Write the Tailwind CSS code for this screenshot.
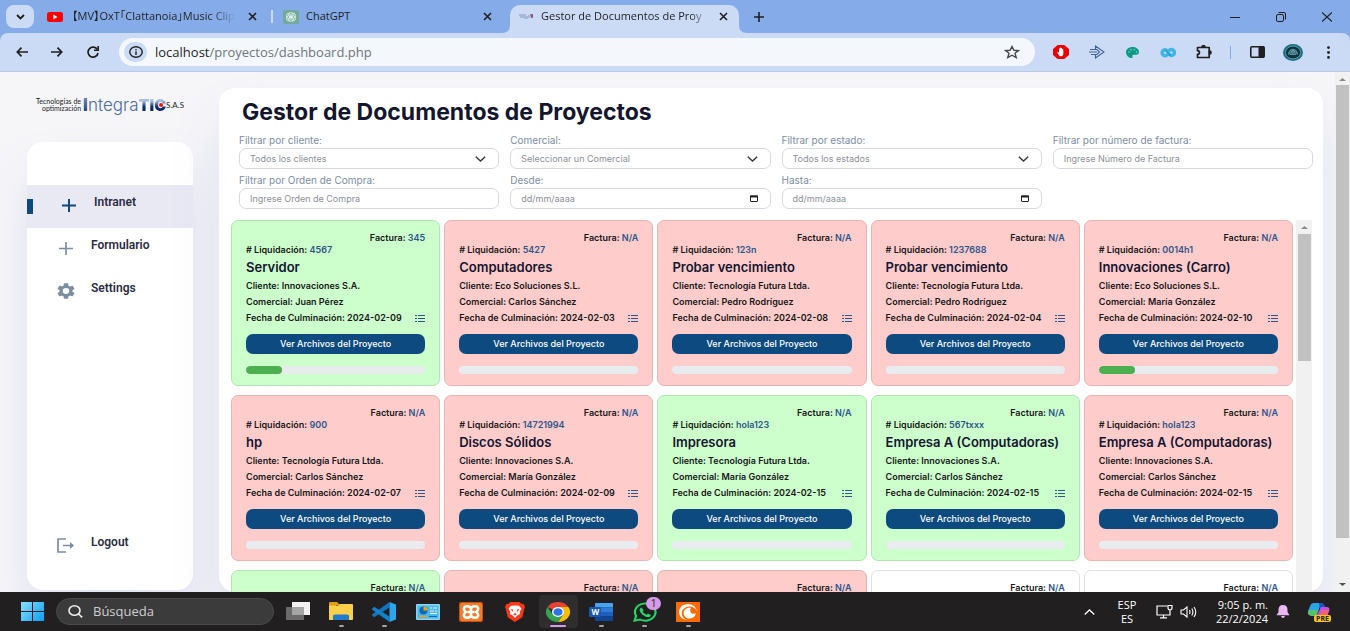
<!DOCTYPE html>
<html lang="es">
<head>
<meta charset="utf-8">
<title>Gestor de Documentos de Proyectos</title>
<script src="https://cdn.jsdelivr.net/npm/@tailwindcss/browser@4"></script>
</head>
<body class="flex h-screen flex-col overflow-hidden bg-[#85ace9] font-['Open_Sans',sans-serif] text-[#1f1f1f]">

<!-- Tab strip -->
<header class="flex h-[33px] shrink-0 items-center">
  <button aria-label="Buscar pestañas" class="ml-[6px] flex h-[23px] w-7 items-center justify-center rounded-lg bg-[#cbdbf5]">
    <svg class="h-[6px] w-[9px]" viewBox="0 0 9 6" fill="none" stroke="#1f1f1f" stroke-width="1.8"><path d="M1 1l3.500 3.500L8 1"/></svg>
  </button>
  <div class="ml-[13px] flex w-[214px] items-center">
    <svg class="h-[10px] w-4 shrink-0" viewBox="0 0 16 10"><rect width="16" height="10" rx="2.500" fill="#f00"/><path d="M6.300 2.600v4.800L10.500 5z" fill="#fff"/></svg>
    <a href="#" class="ml-[9px] w-[164px] overflow-hidden whitespace-nowrap mask-r-from-85% font-['Open_Sans','Noto_Sans_CJK_JP',sans-serif] text-[11px] [font-feature-settings:'palt']">【MV】OxT「Clattanoia」Music Clip</a>
    <button aria-label="Cerrar pestaña" class="ml-3"><svg class="size-[9px]" viewBox="0 0 9 9" stroke="#1f1f1f" stroke-width="1.600"><path d="M1 1l7 7M8 1L1 8"/></svg></button>
  </div>
  <div class="ml-[10px] h-[13px] w-[2px] bg-[#cbdbf5]"></div>
  <div class="ml-[10px] flex w-[219px] items-center">
    <svg class="h-[14px] w-4 shrink-0" viewBox="0 0 16 14"><rect width="16" height="14" rx="2" fill="#74aa9c"/><g fill="none" stroke="#e8f5f0" stroke-width=".8"><ellipse cx="8" cy="4.600" rx="2.600" ry="2"/><ellipse cx="8" cy="9.400" rx="2.600" ry="2"/><ellipse cx="5.500" cy="5.800" rx="2" ry="2.400"/><ellipse cx="10.500" cy="5.800" rx="2" ry="2.400"/><ellipse cx="5.500" cy="8.300" rx="2" ry="2.400"/><ellipse cx="10.500" cy="8.300" rx="2" ry="2.400"/></g></svg>
    <a href="#" class="ml-[7px] flex-1 text-[11px]">ChatGPT</a>
    <button aria-label="Cerrar pestaña" class="mr-[10px]"><svg class="size-[9px]" viewBox="0 0 9 9" stroke="#1f1f1f" stroke-width="1.600"><path d="M1 1l7 7M8 1L1 8"/></svg></button>
  </div>
  <div class="flex h-7 self-end">
    <svg class="h-2 w-2 self-end" viewBox="0 0 8 8"><path d="M8 0v8H0Q8 8 8 0z" fill="#cbdbf5"/></svg>
    <div class="flex w-[229px] items-center rounded-t-[10px] bg-[#cbdbf5] pr-[11px] pb-[5px] pl-[9px]">
      <svg class="h-[7px] w-[15px] shrink-0" viewBox="0 0 15 7"><path d="M0 2h5M1 4h4M6 1v5M8 3v3M10 2v3" stroke="#8096b8"/><path d="M11 1h3v4h-2z" fill="#5f7eb0"/><circle cx="13" cy="3" r="1" fill="#d33"/></svg>
      <a href="#" class="ml-[7px] w-[167px] overflow-hidden whitespace-nowrap mask-r-from-90% text-[11px]">Gestor de Documentos de Proy</a>
      <button aria-label="Cerrar pestaña" class="ml-auto"><svg class="size-[9px]" viewBox="0 0 9 9" stroke="#1f1f1f" stroke-width="1.600"><path d="M1 1l7 7M8 1L1 8"/></svg></button>
    </div>
    <svg class="h-2 w-2 self-end" viewBox="0 0 8 8"><path d="M0 0v8h8Q0 8 0 0z" fill="#cbdbf5"/></svg>
  </div>
  <button aria-label="Nueva pestaña" class="ml-[7px]"><svg class="size-[10px]" viewBox="0 0 10 10" stroke="#1f1f1f" stroke-width="1.600"><path d="M5 0v10M0 5h10"/></svg></button>
  <div class="mr-[18px] ml-auto flex items-center gap-9">
    <button aria-label="Minimizar"><svg class="h-[10px] w-[10px]" viewBox="0 0 10 10" stroke="#1f1f1f"><path d="M0 5.500h10"/></svg></button>
    <button aria-label="Restaurar"><svg class="h-[10px] w-[10px]" viewBox="0 0 10 10" fill="none" stroke="#1f1f1f"><rect x=".5" y="2.500" width="7" height="7" rx="1.500"/><path d="M2.500 .5H8a1.500 1.500 0 0 1 1.500 1.500v5.500"/></svg></button>
    <button aria-label="Cerrar"><svg class="h-[10px] w-[10px]" viewBox="0 0 10 10" stroke="#1f1f1f" stroke-width="1.200"><path d="M0 .5l10 9M10 .5l-10 9"/></svg></button>
  </div>
</header>

<!-- Toolbar -->
<nav aria-label="Navegador" class="flex h-[38px] shrink-0 items-center rounded-t-lg bg-[#cbdbf5]">
  <button aria-label="Atrás" class="ml-4"><svg class="h-[10px] w-3" viewBox="0 0 12 10" fill="none" stroke="#1f1f1f" stroke-width="1.700"><path d="M12 5H1.500M5.500 .7L1.300 5l4.200 4.300"/></svg></button>
  <button aria-label="Adelante" class="ml-[23px]"><svg class="h-[10px] w-3" viewBox="0 0 12 10" fill="none" stroke="#1f1f1f" stroke-width="1.700"><path d="M0 5h10.500M6.500 .7L10.700 5 6.500 9.300"/></svg></button>
  <button aria-label="Recargar" class="ml-6"><svg class="h-3 w-3" viewBox="0 0 12 12" fill="none" stroke="#1f1f1f" stroke-width="1.700"><path d="M10.300 3.500A5 5 0 1 0 11 7"/><path d="M11.200 0v4.300H7" stroke-width="1.600"/></svg></button>
  <div class="ml-5 flex h-7 flex-1 items-center rounded-full bg-[#f4f8fd] px-[5px]">
    <button aria-label="Información del sitio" class="flex h-5 w-[23px] items-center justify-center rounded-full bg-[#cbdbf5]"><svg class="h-3 w-[14px]" viewBox="0 0 14 12" fill="none" stroke="#1f1f1f" stroke-width="1.400"><ellipse cx="7" cy="6" rx="6.200" ry="5.300"/><path d="M7 5.300V9M7 3v1.300"/></svg></button>
    <div class="relative ml-2 h-5 flex-1">
      <input aria-label="Dirección" value="localhost/proyectos/dashboard.php" class="block h-5 w-full bg-transparent text-[13px] leading-5 text-[#70757a] outline-none">
      <span aria-hidden="true" class="pointer-events-none absolute top-0 left-0 bg-[#f4f8fd] text-[13px] leading-5 text-[#1f1f1f]">localhost</span>
    </div>
    <button aria-label="Marcador" class="mr-[10px]"><svg class="h-[14px] w-4" viewBox="0 0 16 14" fill="none" stroke="#474747" stroke-width="1.400"><path d="M8 1.500l1.900 3.800 4.600.3-3.500 2.700 1.200 4.200L8 10.200l-4.200 2.300L5 8.300 1.500 5.600l4.600-.3z"/></svg></button>
  </div>
  <div class="ml-[18px] flex shrink-0 items-center">
    <button aria-label="AdBlock" class="w-4"><svg class="h-[14px] w-4" viewBox="0 0 16 14"><path d="M4.700 0h6.600L16 4.100v5.800L11.300 14H4.700L0 9.900V4.100z" fill="#e60505"/><path d="M5 7l1 .6V3.800c0-.8 1-.8 1 0V3c0-.8 1.100-.8 1.100 0v.6c0-.8 1.100-.8 1.100 0v1c0-.7 1.100-.7 1.100 0V9c0 1.600-1.300 2.300-2.600 2.300C6.300 11.300 5.300 9.500 4.300 7.700z" fill="#fff"/></svg></button>
    <button aria-label="Extensión" class="ml-5 w-4"><svg class="h-[14px] w-4" viewBox="0 0 16 14" fill="none" stroke="#43648f" stroke-width="1.100"><path d="M6.500 4.500V1L15 7l-8.500 6V9.500M1 4.500h7L10.500 7 8 9.500H2M0 7h8"/></svg></button>
    <button aria-label="Paleta" class="ml-[21px] w-3"><svg class="h-[11px] w-[13px]" viewBox="0 0 13 11"><path d="M6.500 0C2.900 0 0 2.200 0 5.200 0 8 2.500 11 5.500 11c1 0 1.300-.6 1-1.300-.5-1 .2-1.900 1.300-1.900h2.400C12 7.800 13 6.700 13 5 13 2 10 0 6.500 0z" fill="#0c9a84"/><g fill="#8fd0c8"><circle cx="3" cy="5" r=".8"/><circle cx="5" cy="2.700" r=".8"/><circle cx="8.300" cy="2.700" r=".8"/><circle cx="10.600" cy="5" r=".8"/></g></svg></button>
    <button aria-label="Infinito" class="ml-[22px] w-4"><svg class="h-[11px] w-4" viewBox="0 0 16 11" fill="none" stroke-linecap="round"><path d="M7.500 7.500L6 8.600a3 3 0 1 1 0-5.700c2 .6 2.500 4.800 4.500 5.400a3 3 0 1 0 0-5.700L9 3.600" stroke="#3fb6ea" stroke-width="3.400"/><path d="M5.500 3.500c2.500.5 2.500 4.500 5 5" stroke="#1b8cc4" stroke-width="1"/></svg></button>
    <button aria-label="Extensiones" class="ml-5 w-[17px]"><svg class="h-[14px] w-[17px]" viewBox="0 0 17 14" fill="none" stroke="#1f1f1f" stroke-width="1.700"><path d="M1.500 2.500h11.700v10H1.500V9.300c2.600-.2 2.600-3.400 0-3.600z" stroke-linejoin="round"/><path d="M6 2.200a1.500 1.500 0 0 1 3 0zM13.500 6a1.500 1.500 0 0 1 0 3z" fill="#1f1f1f"/></svg></button>
    <div class="ml-[17px] h-[13px] w-px bg-[#7cacf8]"></div>
    <button aria-label="Panel lateral" class="ml-[19px] w-[15px]"><svg class="h-3 w-[15px]" viewBox="0 0 15 12"><rect x=".8" y=".8" width="13.400" height="10.400" rx="1" fill="none" stroke="#1f1f1f" stroke-width="1.600"/><path d="M8.500 0H14v12H8.500z" fill="#1f1f1f"/></svg></button>
    <button aria-label="Perfil" class="ml-[18px] w-5"><svg class="h-[17px] w-5" viewBox="0 0 20 17"><ellipse cx="10" cy="8.500" rx="10" ry="8.500" fill="#1d6f80"/><ellipse cx="10" cy="8.500" rx="7.600" ry="6.400" fill="#13303c" stroke="#4fb5c0" stroke-width=".8"/><path d="M5.500 10.500c0-7 9-7 9 0M7 10.500h6M8 8l2-2 2 2z" fill="#397482" stroke="#6fa4ac" stroke-width=".8"/></svg></button>
    <button aria-label="Menú" class="mr-[20px] ml-[24px]"><svg class="h-[13px] w-[3px]" viewBox="0 0 3 13" fill="#1f1f1f"><circle cx="1.500" cy="1.600" r="1.400"/><circle cx="1.500" cy="6.500" r="1.400"/><circle cx="1.500" cy="11.400" r="1.400"/></svg></button>
  </div>
</nav>

<!-- Web page -->
<div class="flex min-h-0 flex-1 border-t border-[#b9c9e6] bg-[#f6f6f9] font-[Inter,sans-serif]">
  <aside class="ml-[27px] flex w-[166px] shrink-0 flex-col pb-[2px]">
    <div class="flex h-[70px] items-center justify-center pb-1 whitespace-nowrap">
      <div class="mr-[2px] text-right font-[Lato,sans-serif] text-[7px] leading-[7px] text-[#222]">Tecnologías de<br>optimización</div>
      <div class="flex items-center text-[17px] leading-5">
        <span class="bg-linear-to-b from-[#7f9ccc] to-[#10346e] bg-clip-text font-black text-transparent">I</span><span class="font-light text-[#4a6ba3]">ntegra</span>
        <span class="relative bg-linear-to-b from-[#a9bfe2] from-30% to-[#062b66] to-60% bg-clip-text text-base leading-5 font-black text-transparent">TIC<i class="absolute top-[8px] right-[3px] size-1 rounded-full bg-[#f01414]"></i></span>
      </div>
      <span class="font-[Lato,sans-serif] text-[8px] text-[#222]">S.A.S</span>
    </div>
    <div class="flex flex-1 flex-col overflow-hidden rounded-2xl bg-white pt-[43px] shadow-[0_32px_48px_rgba(132,139,200,0.18)]">
      <a href="#" class="flex h-[43px] items-start bg-[#e9e9f4] font-[Roboto,sans-serif] text-xs font-semibold text-[#2b2d44]">
        <span class="mt-[14px] h-[15px] w-[6px] bg-[#0d4a80]"></span>
        <svg class="mt-[14px] ml-[29px] h-[13px] w-[14px]" viewBox="0 0 14 13" stroke="#0d4a80" stroke-width="2"><path d="M7 0v13M0 6.500h14"/></svg>
        <span class="mt-[9px] ml-[18px]">Intranet</span>
      </a>
      <a href="#" class="flex h-[43px] items-start font-[Roboto,sans-serif] text-xs font-semibold text-[#2b2d44]">
        <svg class="mt-[14px] ml-8 h-[13px] w-[14px]" viewBox="0 0 14 13" stroke="#7d8da1" stroke-width="1.700"><path d="M7 0v13M0 6.500h14"/></svg>
        <span class="mt-[9px] ml-[18px]">Formulario</span>
      </a>
      <a href="#" class="flex h-[43px] items-start font-[Roboto,sans-serif] text-xs font-semibold text-[#2b2d44]">
        <svg class="mt-3 ml-[30px] h-4 w-[18px]" viewBox="2 2 20 20" preserveAspectRatio="none" fill="#7d8da1"><path d="M19.140 12.940c.04-.3.060-.61.060-.94s-.02-.64-.07-.94l2.030-1.580a.49.490 0 0 0 .12-.61l-1.920-3.320a.49.490 0 0 0-.59-.22l-2.390.960c-.5-.38-1.030-.7-1.620-.94l-.36-2.540a.48.480 0 0 0-.48-.41h-3.840c-.24 0-.43.170-.47.410l-.36 2.540c-.59.240-1.130.570-1.620.940l-2.390-.96a.48.480 0 0 0-.59.220L2.740 8.870a.48.480 0 0 0 .12.610l2.030 1.580c-.05.3-.09.630-.09.940s.02.640.070.940l-2.030 1.580a.49.490 0 0 0-.12.610l1.920 3.320c.12.220.37.290.59.220l2.390-.96c.5.380 1.030.7 1.620.940l.36 2.540c.05.240.24.410.48.410h3.840c.24 0 .44-.17.470-.41l.36-2.540c.59-.24 1.130-.56 1.620-.94l2.390.960c.22.080.47 0 .59-.22l1.920-3.320a.48.480 0 0 0-.12-.61zM12 15.600A3.600 3.600 0 1 1 12 8.400a3.600 3.600 0 0 1 0 7.200z"/></svg>
        <span class="mt-[9px] ml-4">Settings</span>
      </a>
      <a href="#" class="mt-auto flex h-[65px] items-start font-[Roboto,sans-serif] text-xs font-semibold text-[#2b2d44]">
        <svg class="mt-[13px] ml-[30px] h-[15px] w-[18px]" viewBox="0 0 18 15" fill="none" stroke="#7d8da1" stroke-width="1.700"><path d="M9 1H1v13h8M6 7.500h10"/><path d="M13 4l4 3.500-4 3.500z" fill="#7d8da1" stroke="none"/></svg>
        <span class="mt-[9px] ml-4">Logout</span>
      </a>
    </div>
  </aside>

  <main class="mt-4 mr-3 ml-[26px] flex min-w-0 flex-1 flex-col rounded-2xl bg-white shadow-[0_32px_48px_rgba(132,139,200,0.18)]">
    <h1 class="mt-2 ml-[23px] text-[23px] leading-8 font-bold text-[#14152f]">Gestor de Documentos de Proyectos</h1>
    <form class="mr-[10px] ml-5 grid grid-cols-4 gap-x-[11px] text-[10px] text-[#7d8da1]">
      <div class="h-10 pt-[6px]">
        <label for="cliente" class="block h-[13px] leading-[13px]">Filtrar por cliente:</label>
        <div class="relative mt-px">
          <select id="cliente" class="h-[21px] w-full appearance-none rounded-[7px] border border-[#d6dae0] bg-white px-[10px] text-[9px] text-[#8b8f96]"><option>Todos los clientes</option></select>
          <svg class="pointer-events-none absolute top-[8px] right-[13px] h-[6px] w-[11px]" viewBox="0 0 11 6" fill="none" stroke="#343a40" stroke-width="1.500"><path d="M.8.700l4.700 4.300L10.200.7"/></svg>
        </div>
      </div>
      <div class="h-10 pt-[6px]">
        <label for="comercial" class="block h-[13px] leading-[13px]">Comercial:</label>
        <div class="relative mt-px">
          <select id="comercial" class="h-[21px] w-full appearance-none rounded-[7px] border border-[#d6dae0] bg-white px-[10px] text-[9px] text-[#8b8f96]"><option>Seleccionar un Comercial</option></select>
          <svg class="pointer-events-none absolute top-[8px] right-[13px] h-[6px] w-[11px]" viewBox="0 0 11 6" fill="none" stroke="#343a40" stroke-width="1.500"><path d="M.8.700l4.700 4.300L10.200.7"/></svg>
        </div>
      </div>
      <div class="h-10 pt-[6px]">
        <label for="estado" class="block h-[13px] leading-[13px]">Filtrar por estado:</label>
        <div class="relative mt-px">
          <select id="estado" class="h-[21px] w-full appearance-none rounded-[7px] border border-[#d6dae0] bg-white px-[10px] text-[9px] text-[#8b8f96]"><option>Todos los estados</option></select>
          <svg class="pointer-events-none absolute top-[8px] right-[13px] h-[6px] w-[11px]" viewBox="0 0 11 6" fill="none" stroke="#343a40" stroke-width="1.500"><path d="M.8.700l4.700 4.300L10.200.7"/></svg>
        </div>
      </div>
      <div class="h-10 pt-[6px]">
        <label for="factura" class="block h-[13px] leading-[13px]">Filtrar por número de factura:</label>
        <input id="factura" placeholder="Ingrese Número de Factura" class="mt-px block h-[21px] w-full rounded-[7px] border border-[#d6dae0] px-[10px] text-[9px] placeholder:text-[#8b8f96]">
      </div>
      <div class="h-10 pt-[6px]">
        <label for="orden" class="block h-[13px] leading-[13px]">Filtrar por Orden de Compra:</label>
        <input id="orden" placeholder="Ingrese Orden de Compra" class="mt-px block h-[21px] w-full rounded-[7px] border border-[#d6dae0] px-[10px] text-[9px] placeholder:text-[#8b8f96]">
      </div>
      <div class="h-10 pt-[6px]">
        <label for="desde" class="block h-[13px] leading-[13px]">Desde:</label>
        <div class="relative mt-px">
          <input id="desde" placeholder="dd/mm/aaaa" class="block h-[21px] w-full rounded-[7px] border border-[#d6dae0] px-[10px] text-[9px] placeholder:text-[#8b8f96]">
          <svg class="absolute top-[7px] right-[13px] h-[7px] w-2" viewBox="0 0 8 7" fill="none" stroke="#222"><rect x=".5" y="1" width="7" height="5.500" rx=".5"/><path d="M0 1.500h8" stroke-width="2"/></svg>
        </div>
      </div>
      <div class="h-10 pt-[6px]">
        <label for="hasta" class="block h-[13px] leading-[13px]">Hasta:</label>
        <div class="relative mt-px">
          <input id="hasta" placeholder="dd/mm/aaaa" class="block h-[21px] w-full rounded-[7px] border border-[#d6dae0] px-[10px] text-[9px] placeholder:text-[#8b8f96]">
          <svg class="absolute top-[7px] right-[13px] h-[7px] w-2" viewBox="0 0 8 7" fill="none" stroke="#222"><rect x=".5" y="1" width="7" height="5.500" rx=".5"/><path d="M0 1.500h8" stroke-width="2"/></svg>
        </div>
      </div>
    </form>
    <div class="mt-3 mr-[11px] ml-3 flex min-h-0 flex-1">
      <section id="cards" aria-label="Proyectos" class="grid flex-1 auto-rows-max grid-cols-5 gap-x-1 gap-y-[9px] overflow-hidden"></section>
      <div class="ml-[3px] flex w-4 flex-col items-center bg-[#f1f1f1]">
        <svg class="mt-[6px] mb-[5px] h-[3px] w-[7px] shrink-0" viewBox="0 0 6 3" preserveAspectRatio="none"><path d="M3 0l3 3H0z" fill="#8a8a8a"/></svg>
        <div class="h-[127px] w-[13px] bg-[#c1c1c1]"></div>
      </div>
    </div>
  </main>

  <div class="flex w-[15px] shrink-0 flex-col items-center bg-[#f1f1f1]">
    <svg class="mt-[6px] mb-[4px] h-[3px] w-[7px] shrink-0" viewBox="0 0 6 3" preserveAspectRatio="none"><path d="M3 0l3 3H0z" fill="#8a8a8a"/></svg>
    <div class="mb-[45px] w-[13px] flex-1 bg-[#c1c1c1]"></div>
    <svg class="mb-[6px] h-[3px] w-[7px] shrink-0" viewBox="0 0 6 3" preserveAspectRatio="none"><path d="M0 0h6L3 3z" fill="#505050"/></svg>
  </div>
</div>

<!-- Taskbar -->
<footer class="flex h-[39px] shrink-0 items-center bg-[#211f20] text-white">
  <button aria-label="Inicio" class="ml-[21px]"><svg class="h-[19px] w-[23px]" viewBox="0 0 23 19"><defs><linearGradient id="win" gradientUnits="userSpaceOnUse" x1="0" y1="0" x2="23" y2="19"><stop stop-color="#8be0ff"/><stop offset="1" stop-color="#0a9cf5"/></linearGradient></defs><path d="M0 0h11v9H0zM12 0h11v9H12zM0 10h11v9H0zM12 10h11v9H12z" fill="url(#win)"/></svg></button>
  <label class="ml-3 flex h-[27px] w-[218px] items-center rounded-full border border-[#4b4a4b] bg-[#3c3b3c] px-[11px]">
    <svg class="h-[13px] w-[15px] shrink-0" viewBox="0 0 15 13" fill="none" stroke="#eee" stroke-width="1.600"><ellipse cx="6.500" cy="5.500" rx="5.500" ry="4.700"/><path d="M10.500 9l3.700 3.400"/></svg>
    <input aria-label="Búsqueda" placeholder="Búsqueda" class="ml-[10px] w-full bg-transparent text-[13px] outline-none placeholder:text-[#cfcfcf]">
  </label>
  <div class="ml-[2px] grid w-[434px] grid-cols-10">
    <button aria-label="Vista de tareas" class="flex h-[33px] items-center justify-center"><svg class="h-[19px] w-6" viewBox="0 0 24 19"><path d="M0 5h18v13H0z" fill="#6a6a6a"/><path d="M6 0h18v13H6z" fill="#f1f1f1"/><path d="M6 5h12v8H6z" fill="#a5a5a5"/></svg></button>
    <button aria-label="Explorador" class="relative flex h-[33px] items-center justify-center"><svg class="h-[19px] w-6" viewBox="0 0 24 19"><path d="M0 1q0-1 1-1h7l3 3h-4v15H1q-1 0-1-1z" fill="#e3a008"/><path d="M0 3.500h9L11 2h12q1 0 1 1v14q0 1-1 1H1q-1 0-1-1z" fill="#fcd04b"/><path d="M4 18v-4q0-1.500 2-1.500h12q2 0 2 1.500v4z" fill="#1f7dcb"/></svg><i class="absolute bottom-[1px] h-[2px] w-[5px] rounded bg-[#a3a3a3]"></i></button>
    <button aria-label="Visual Studio Code" class="relative flex h-[33px] items-center justify-center"><svg class="h-5 w-6" viewBox="0 0 24 20"><path d="M17.500 5.400L2.200 15.200 0 13.200v-.8L17.500 0z" fill="#0f76bd"/><path d="M17.500 20L0 7.600v-.8l2.200-2L17.500 14.600z" fill="#1282cc"/><path d="M17.500 0L24 2.600v14.800L17.500 20z" fill="#2aa5ee"/></svg><i class="absolute bottom-[1px] h-[2px] w-[5px] rounded bg-[#a3a3a3]"></i></button>
    <button aria-label="Panel de control" class="flex h-[33px] items-center justify-center"><svg class="h-4 w-6" viewBox="0 0 24 16"><rect width="24" height="16" rx="1" fill="#8bd6f5"/><rect x="1.500" y="1.500" width="21" height="13" fill="#4db6ea"/><circle cx="7.500" cy="6.500" r="4" fill="#0b6cb5"/><path d="M7.500 6.500v-4a4 4 0 0 1 4 4z" fill="#f59f1b"/><path d="M14 4h2m1 0h4M14 7h4m1 0h2M14 9.500h7" stroke="#e8f8ff" stroke-width="1.200"/><path d="M3 12.500h8" stroke="#f59f1b" stroke-width="1.500"/><path d="M13 12.500h8" stroke="#0b6cb5"/></svg></button>
    <button aria-label="XAMPP" class="flex h-[33px] items-center justify-center"><svg class="h-5 w-6" viewBox="0 0 24 20"><rect width="24" height="20" rx="2" fill="#c9500f"/><rect x="1" y="1" width="22" height="18" rx="2" fill="#f07c2c"/><path d="M12 6.500C11 3.500 5 3.500 4.800 6.800c0 1.700 1 2.500 2 3.200-1 .7-2 1.500-2 3.200.2 3.300 6.200 3.300 7.200.3 1 3 7 3 7.200-.3 0-1.700-1-2.500-2-3.200 1-.7 2-1.500 2-3.200C19 3.500 13 3.500 12 6.500zM8.500 10h7M12 7v6" fill="none" stroke="#fff" stroke-width="2.500"/></svg></button>
    <button aria-label="Brave" class="flex h-[33px] items-center justify-center"><svg class="h-5 w-5" viewBox="0 0 20 20"><path d="M5.500 0h9l2 2 2-.2 1.500 3-.7 2-2 8.500L10 20l-7.300-4.700-2-8.500L0 4.800l1.500-3 2 .2z" fill="#f6391b"/><path d="M10 3.500l4 .3 2.500 3-1.800 3 .3 2.200-3 1.700L10 16l-2-2.300L5 12l.3-2.200-1.800-3 2.500-3z" fill="#fff"/><path d="M5.500 7l3 .8-1 2zM14.500 7l-3 .8 1 2zM8.200 12.200L10 11l1.800 1.200L10 13.500z" fill="#f6391b"/></svg></button>
    <button aria-label="Chrome" class="relative flex h-[33px] items-center justify-center"><span class="flex h-[33px] w-[39px] items-center justify-center rounded bg-[#2f2d2e]"><svg class="h-5 w-6" viewBox="0 0 24 24" preserveAspectRatio="none"><path d="M12 12L1.600 6a12 12 0 0 1 20.800 0z" fill="#e94235"/><path d="M12 6h10.400A12 12 0 0 1 12 24l5.200-9z" fill="#fbbc04"/><path d="M1.600 6A12 12 0 0 0 12 24l5.200-9H6.800z" fill="#34a353"/><circle cx="12" cy="12" r="6" fill="#fff"/><circle cx="12" cy="12" r="4.600" fill="#2d73e8"/></svg></span><i class="absolute bottom-[1px] h-[2px] w-4 rounded bg-[#d49be8]"></i></button>
    <button aria-label="Word" class="relative flex h-[33px] items-center justify-center"><span class="relative"><svg class="h-[18px] w-6" viewBox="0 0 24 18"><path d="M6 1q0-1 1-1h16q1 0 1 1v3.500H6z" fill="#45a3ef"/><path d="M6 4.500h18V9H6z" fill="#2f7cd8"/><path d="M6 9h18v4.500H6z" fill="#1c5fbc"/><path d="M6 13.500h18V17q0 1-1 1H7q-1 0-1-1z" fill="#134494"/><rect y="4" width="12" height="10" rx="1" fill="#1a55b0"/></svg><span class="absolute top-1 left-[2px] text-[8px] leading-[10px] font-bold">W</span></span><i class="absolute bottom-[1px] h-[2px] w-[5px] rounded bg-[#a3a3a3]"></i></button>
    <button aria-label="WhatsApp" class="relative flex h-[33px] items-center justify-center"><svg class="h-5 w-6" viewBox="0 0 24 24" preserveAspectRatio="none"><path d="M1.500 22.500l1.600-5.700A10.300 10.300 0 1 1 7.100 21z" fill="none" stroke="#25d366" stroke-width="2.200"/><path d="M8.600 6.500c-.6 0-2 1-2 3 0 3.500 5 8.500 8.300 8.500 1.900 0 3-1.200 3-2.500l-3-1.800-1.500 1.500c-1.500-.6-3.200-2.200-3.800-3.700l1.100-1.400z" fill="#25d366"/></svg><span class="absolute top-[2px] left-[23px] flex h-[13px] w-[15px] items-center justify-center rounded-full bg-[#d49be8] text-[10px] text-[#222]">1</span><i class="absolute bottom-[1px] h-[2px] w-[5px] rounded bg-[#a3a3a3]"></i></button>
    <button aria-label="Crunchyroll" class="relative flex h-[33px] items-center justify-center"><svg class="h-5 w-6" viewBox="0 0 24 20"><path d="M0 0h24v20H0z" fill="#ff6a00"/><path d="M21 9.500C20.500 5 16.500 2 12 2 7 2 3 5.600 3 10s3.500 7.700 8 8C8 17 5.800 14.500 5.800 11.500 5.800 7.500 9.300 4.500 13.500 4.500c3.500 0 6.500 2 7.500 5z" fill="#fff"/><path d="M15 6c-4-.8-7.300 1.700-7.300 5.200 0 3 2.700 5.300 6 5.300 3.500 0 6.200-2.400 6-5.400-1.200 1-3.200 1-4.400-.2-1.400-1.500-1.500-3.500-.3-4.900z" fill="#fff"/></svg><i class="absolute bottom-[1px] h-[2px] w-[5px] rounded bg-[#a3a3a3]"></i></button>
  </div>
  <div class="mr-[19px] ml-auto flex items-center text-[11px] leading-[14px]">
    <button aria-label="Iconos ocultos"><svg class="h-[6px] w-[11px]" viewBox="0 0 11 6" fill="none" stroke="#fff" stroke-width="1.300"><path d="M.7 5.500L5.500 1l4.800 4.500"/></svg></button>
    <span class="ml-[20px] w-6 text-center">ESP<br>ES</span>
    <svg class="ml-[17px] h-[15px] w-[17px]" viewBox="0 0 17 15" fill="none" stroke="#fff" stroke-width="1.200"><path d="M11 2H1v9h13V8M4 13.800h7M7.500 11v3M12 1.500h4V4q0 1.800-2 1.800T12 4zM14 6v3"/></svg>
    <svg class="ml-[7px] h-3 w-[17px]" viewBox="0 0 17 12" fill="none" stroke="#fff" stroke-width="1.100"><path d="M1 4h2.500L7 1v10L3.500 8H1zM9.500 4q1 2 0 4M11.800 2.500q2.200 3.500 0 7M14 1q3.500 5 0 10"/></svg>
    <time class="ml-[15px] w-[56px] text-right whitespace-nowrap">9:05 p. m.<br>22/2/2024</time>
    <svg class="ml-2 h-[13px] w-[14px]" viewBox="0 0 14 13" fill="#e9b8f0"><path d="M7 0C4 0 2.500 2 2.500 4.500V7L.500 10.300h13L11.500 7V4.500C11.500 2 10 0 7 0zM5 11h4q-.5 2-2 2t-2-2z"/></svg>
    <span class="relative ml-[17px]"><svg class="h-5 w-[24px]" viewBox="0 0 24 20"><path d="M7 1h7l-4 12H4Q0 13 1 9L3.500 3Q4.500 1 7 1z" fill="#27a6e5"/><path d="M3 8h8l-2 6H4Q0 13 1.500 9.500z" fill="#57c26a"/><path d="M12 1h3q2 0 2.700 2.500L19 7h-6z" fill="#1656c4"/><path d="M14 5h6q3 0 2.300 3.500L20 15H9z" fill="#c052e0"/><path d="M15 8h7l-2 6h-8z" fill="#f1607f"/></svg><span class="absolute right-0 bottom-0 rounded-[2px] bg-[#fdc613] px-[2px] text-[7px] leading-[7px] font-bold text-[#222]">PRE</span></span>
  </div>
</footer>

<script>
const tones = {
  green: "border-[#b4e3b4] bg-[#ccffcc]",
  red: "border-[#e8b4b4] bg-[#ffcccc]",
  white: "border-[#e0e0e0] bg-white"
};
const projects = [
  ["green","345","4567","Servidor","Innovaciones S.A.","Juan Pérez","2024-02-09",20],
  ["red","N/A","5427","Computadores","Eco Soluciones S.L.","Carlos Sánchez","2024-02-03",0],
  ["red","N/A","123n","Probar vencimiento","Tecnología Futura Ltda.","Pedro Rodríguez","2024-02-08",0],
  ["red","N/A","1237688","Probar vencimiento","Tecnología Futura Ltda.","Pedro Rodríguez","2024-02-04",0],
  ["red","N/A","0014h1","Innovaciones (Carro)","Eco Soluciones S.L.","María González","2024-02-10",20],
  ["red","N/A","900","hp","Tecnología Futura Ltda.","Carlos Sánchez","2024-02-07",0],
  ["red","N/A","14721994","Discos Sólidos","Innovaciones S.A.","María González","2024-02-09",0],
  ["green","N/A","hola123","Impresora","Tecnología Futura Ltda.","María González","2024-02-15",0],
  ["green","N/A","567txxx","Empresa A (Computadoras)","Innovaciones S.A.","Carlos Sánchez","2024-02-15",0],
  ["red","N/A","hola123","Empresa A (Computadoras)","Innovaciones S.A.","Carlos Sánchez","2024-02-15",0],
  ["green","N/A"],["red","N/A"],["red","N/A"],["white","N/A"],["white","N/A"]
];
document.getElementById("cards").innerHTML = projects.map(([tone, invoice, num, name, client, seller, date, done]) => `
  <article class="h-[166px] rounded-[7px] border px-[14px] pt-[11px] text-[9px] font-semibold whitespace-nowrap text-[#181818] ${tones[tone]}">
    <p class="text-right leading-3">Factura: <span class="text-[#2d5688]">${invoice}</span></p>
    ${name ? `
    <p class="leading-3"># Liquidación: <span class="text-[#2d5688]">${num}</span></p>
    <h2 class="text-[13px] leading-[22px] font-semibold text-[#14152f]">${name}</h2>
    <p class="leading-4">Cliente: ${client}</p>
    <p class="leading-4">Comercial: ${seller}</p>
    <div class="flex items-center justify-between leading-4"><p>Fecha de Culminación: ${date}</p>
      <button aria-label="Detalles" class="flex"><svg class="h-[7px] w-[10px]" viewBox="0 0 10 7" stroke="#2d5688" stroke-width="1"><path d="M0 .5h2M0 3.500h2M0 6.500h2M3 .5h7M3 3.500h7M3 6.500h7"/></svg></button></div>
    <button class="mt-2 block h-5 w-full rounded-[7px] bg-[#0d4a80] text-[9px] font-medium text-white">Ver Archivos del Proyecto</button>
    <div role="progressbar" aria-label="Avance" aria-valuenow="${done}" class="mt-3 h-2 overflow-hidden rounded-full bg-[#e9ecef]"><div class="h-full rounded-full bg-[#4caf50]" style="width:${done}%"></div></div>` : ""}
  </article>`).join("");
</script>
</body>
</html>
